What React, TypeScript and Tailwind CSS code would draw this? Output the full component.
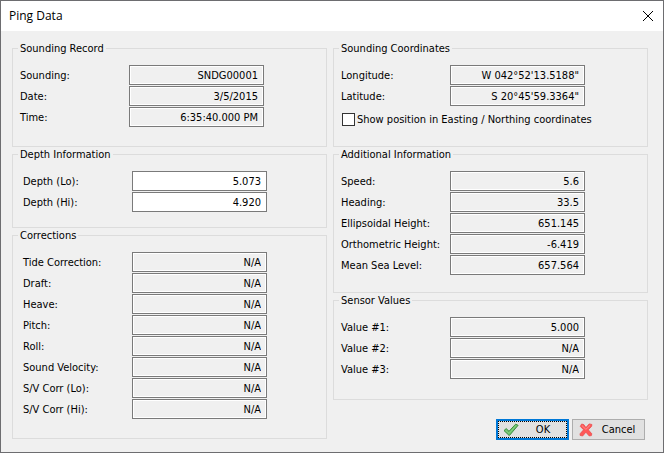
import { useId } from "react"
import type { ReactNode } from "react"
import { clsx } from "clsx"

type Reading = { label: string; value: string }

const sounding: Reading[] = [
  { label: "Sounding:", value: "SNDG00001" },
  { label: "Date:", value: "3/5/2015" },
  { label: "Time:", value: "6:35:40.000 PM" },
]

const depth: Reading[] = [
  { label: "Depth (Lo):", value: "5.073" },
  { label: "Depth (Hi):", value: "4.920" },
]

const corrections: Reading[] = [
  { label: "Tide Correction:", value: "N/A" },
  { label: "Draft:", value: "N/A" },
  { label: "Heave:", value: "N/A" },
  { label: "Pitch:", value: "N/A" },
  { label: "Roll:", value: "N/A" },
  { label: "Sound Velocity:", value: "N/A" },
  { label: "S/V Corr (Lo):", value: "N/A" },
  { label: "S/V Corr (Hi):", value: "N/A" },
]

const coordinates: Reading[] = [
  { label: "Longitude:", value: "W 042°52'13.5188\"" },
  { label: "Latitude:", value: "S 20°45'59.3364\"" },
]

const additional: Reading[] = [
  { label: "Speed:", value: "5.6" },
  { label: "Heading:", value: "33.5" },
  { label: "Ellipsoidal Height:", value: "651.145" },
  { label: "Orthometric Height:", value: "-6.419" },
  { label: "Mean Sea Level:", value: "657.564" },
]

const sensors: Reading[] = [
  { label: "Value #1:", value: "5.000" },
  { label: "Value #2:", value: "N/A" },
  { label: "Value #3:", value: "N/A" },
]

function Group({ title, className, children }: { title: string; className: string; children: ReactNode }) {
  return (
    <fieldset className={clsx("min-w-0 border border-[#dcdcdc] px-[5px] pt-[10px]", className)}>
      <legend className="px-[2px] leading-[13px]">{title}</legend>
      {children}
    </fieldset>
  )
}

function Fields({ rows, editable, indent }: { rows: Reading[]; editable?: boolean; indent?: boolean }) {
  const id = useId()
  return (
    <div className={clsx("flex flex-col gap-px", indent ? "pl-[5px]" : "pl-[2px]")}>
      {rows.map((row, i) => (
        <div key={row.label} className="flex items-center">
          <label htmlFor={`${id}-${i}`} className="w-[109px] shrink-0 whitespace-nowrap">
            {row.label}
          </label>
          <input
            id={`${id}-${i}`}
            type="text"
            defaultValue={row.value}
            readOnly={!editable}
            className={clsx(
              "h-5 w-[135px] min-w-0 border border-[#7a7a7a] px-[5px] text-right outline-none",
              "shadow-[inset_0_0_0_1px_#ffffff]",
              editable ? "bg-white" : "bg-[#f0f0f0]",
            )}
          />
        </div>
      ))}
    </div>
  )
}

function TickIcon() {
  return (
    <svg width="16" height="14" viewBox="0 0 16 14" aria-hidden="true">
      <path
        d="M1 7.6 3.2 5.6 6 8.3 12.6 1.2 15.1 2.3 6.3 12.6Z"
        fill="#6cc069"
        stroke="#3d8f3f"
        strokeWidth="1"
        strokeLinejoin="round"
      />
      <path d="M2.6 7.4 6.1 10.4 13.2 2.4" fill="none" stroke="#8ed688" strokeWidth="0.8" />
    </svg>
  )
}

function CrossIcon() {
  return (
    <svg width="14" height="14" viewBox="0 0 14 14" aria-hidden="true">
      <path
        d="M2.6 1 4.8 1.6 6.9 4.6 10.2 0.9 12.9 1.5 12.6 3.3 9.3 6.8 12.8 10.8 12.4 12.6 10.2 12.9 6.9 9.2 3.6 13 1 12.3 1.2 10.6 4.6 6.8 1.3 3.4Z"
        fill="#ff5757"
        stroke="#e84e4e"
        strokeWidth="0.8"
        strokeLinejoin="round"
      />
      <path d="M2.8 2.4 6.9 6.4 11.2 2.2" fill="none" stroke="#ff8f8f" strokeWidth="1" />
    </svg>
  )
}

export default function App() {
  return (
    <div
      role="dialog"
      aria-labelledby="dialog-title"
      className="flex min-h-screen flex-col border border-[#6d6d70] bg-[#f0f0f0] font-['DejaVu_Sans_Condensed','DejaVu_Sans',sans-serif] text-[11px] leading-[13px] text-black"
    >
      <header className="flex h-[30px] items-center justify-between bg-white pl-2 pr-[9px]">
        <h1 id="dialog-title" className="font-['Open_Sans',sans-serif] text-[12px] leading-4">
          Ping Data
        </h1>
        <button type="button" aria-label="Close" className="grid size-3 place-items-center">
          <svg width="12" height="12" viewBox="0 0 12 12" aria-hidden="true">
            <path d="M1 1 11 11M11 1 1 11" fill="none" stroke="#000000" strokeWidth="1" />
          </svg>
        </button>
      </header>

      <main className="grid grid-cols-2 gap-x-[6px] pb-3 pl-[11px] pr-[15px] pt-[11px]">
        <div className="flex flex-col gap-px">
          <Group title="Sounding Record" className="pb-[19px]">
            <Fields rows={sounding} />
          </Group>
          <Group title="Depth Information" className="pb-[15px]">
            <Fields rows={depth} editable indent />
          </Group>
          <Group title="Corrections" className="pb-[19px]">
            <Fields rows={corrections} indent />
          </Group>
        </div>

        <div className="flex flex-col gap-px">
          <Group title="Sounding Coordinates" className="pb-[20px]">
            <Fields rows={coordinates} />
            <label className="mt-[7px] flex items-center gap-[2px] pl-[3px] whitespace-nowrap">
              <input type="checkbox" className="size-[13px] appearance-none border border-[#333333] bg-white" />
              Show position in Easting / Northing coordinates
            </label>
          </Group>
          <Group title="Additional Information" className="pb-[17px]">
            <Fields rows={additional} />
          </Group>
          <Group title="Sensor Values" className="pb-[20px]">
            <Fields rows={sensors} />
          </Group>

          <div className="mt-[18px] flex justify-end gap-[3px] pr-[3px]">
            <button
              type="button"
              className="flex h-[21px] w-[73px] items-center border-2 border-[#0078d7] bg-[#e1e1e1] pl-[5px] outline-1 -outline-offset-3 outline-dotted outline-black"
            >
              <TickIcon />
              <span className="flex-1 text-center">OK</span>
            </button>
            <button
              type="button"
              className="flex h-[21px] w-[73px] items-center border border-[#adadad] bg-[#e1e1e1] pl-[6px]"
            >
              <CrossIcon />
              <span className="flex-1 text-center">Cancel</span>
            </button>
          </div>
        </div>
      </main>
    </div>
  )
}
